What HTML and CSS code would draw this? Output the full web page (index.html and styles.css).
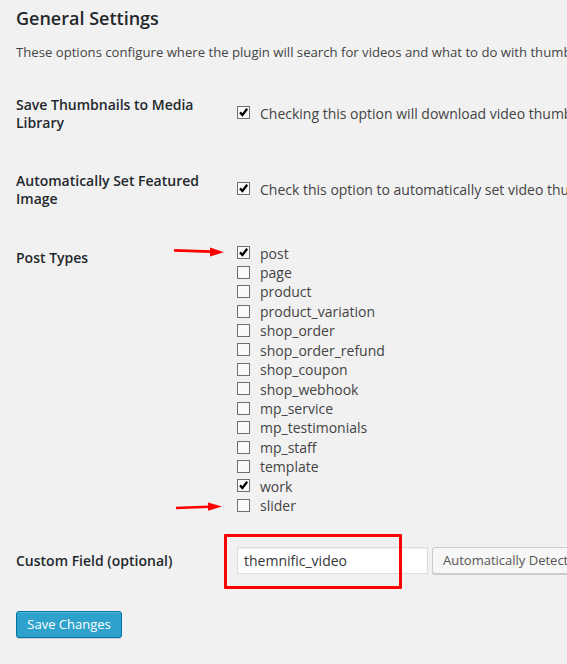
FILE: index.html
```html
<!DOCTYPE html>
<html>
<head>
<meta charset="utf-8">
<link rel="stylesheet" href="styles.css">
</head>
<body>
<div class="wrap">
  <h2 class="title">General Settings</h2>
  <p class="desc">These options configure where the plugin will search for videos and what to do with thumbnails once they are found.</p>

  <div class="row row-1">
    <div class="th">Save Thumbnails to Media Library</div>
    <div class="td">
      <label class="opt"><span class="cb checked"><svg viewBox="0 0 11 11"><path d="M2 5.4 L4.4 8 L9.2 1.8"/></svg></span>Checking this option will download video thumbnails to your media library</label>
    </div>
  </div>

  <div class="row row-2">
    <div class="th">Automatically Set Featured Image</div>
    <div class="td">
      <label class="opt"><span class="cb checked"><svg viewBox="0 0 11 11"><path d="M2 5.4 L4.4 8 L9.2 1.8"/></svg></span>Check this option to automatically set video thumbnails as the featured image</label>
    </div>
  </div>

  <div class="row row-3">
    <div class="th">Post Types</div>
    <div class="td list">
      <svg class="arrow arrow-1" viewBox="0 0 52 12"><path d="M1 4.4 L38 5.6" class="shaft"/><path d="M37 1.5 L51 6.2 L37 10.5 Z" class="head"/></svg>
      <label class="opt"><span class="cb checked"><svg viewBox="0 0 11 11"><path d="M2 5.4 L4.4 8 L9.2 1.8"/></svg></span>post</label>
      <label class="opt"><span class="cb"></span>page</label>
      <label class="opt"><span class="cb"></span>product</label>
      <label class="opt"><span class="cb"></span>product_variation</label>
      <label class="opt"><span class="cb"></span>shop_order</label>
      <label class="opt"><span class="cb"></span>shop_order_refund</label>
      <label class="opt"><span class="cb"></span>shop_coupon</label>
      <label class="opt"><span class="cb"></span>shop_webhook</label>
      <label class="opt"><span class="cb"></span>mp_service</label>
      <label class="opt"><span class="cb"></span>mp_testimonials</label>
      <label class="opt"><span class="cb"></span>mp_staff</label>
      <label class="opt"><span class="cb"></span>template</label>
      <label class="opt"><span class="cb checked"><svg viewBox="0 0 11 11"><path d="M2 5.4 L4.4 8 L9.2 1.8"/></svg></span>work</label>
      <label class="opt"><span class="cb"></span>slider</label>
      <svg class="arrow arrow-2" viewBox="0 0 48 12"><path d="M1 7 L34 5.8" class="shaft"/><path d="M33 1.6 L47 5.6 L33 9.8 Z" class="head"/></svg>
    </div>
  </div>

  <div class="row row-4">
    <div class="th">Custom Field (optional)</div>
    <div class="td field">
      <span class="highlight"></span>
      <input class="text" type="text" value="themnific_video">
      <button class="btn">Automatically Detect</button>
    </div>
  </div>

  <div class="submit">
    <button class="primary">Save Changes</button>
  </div>
</div>
</body>
</html>
```

FILE: styles.css
```css
html, body {
  margin: 0;
  padding: 0;
  background: #f1f1f1;
  overflow: hidden;
}
body {
  font-family: "Open Sans", "Noto Sans", sans-serif;
  font-size: 13px;
  color: #444;
  width: 567px;
  height: 664px;
}
.wrap {
  padding-left: 16px;
  white-space: nowrap;
}
.title {
  margin: 0;
  padding-top: 5px;
  font-size: 18px;
  line-height: 26px;
  font-weight: 600;
  color: #23282d;
}
.desc {
  margin: 12px 0 0;
  font-size: 13.15px;
  line-height: 19.5px;
}
.row {
  display: grid;
  grid-template-columns: 221px auto;
  align-items: start;
}
.th {
  white-space: normal;
  width: 200px;
  font-size: 14px;
  line-height: 18px;
  font-weight: 600;
  color: #23282d;
}
.td {
  position: relative;
}
.row-1 { margin-top: 33px; }
.row-1 .td { padding-top: 8px; }
.row-2 { margin-top: 40px; }
.row-2 .td { padding-top: 8px; }
.row-3 { margin-top: 41px; }
.row-3 .td { margin-top: -5px; }
.opt {
  display: flex;
  align-items: center;
  height: 19.45px;
  font-size: 14px;
  line-height: 19.45px;
}
.cb {
  box-sizing: border-box;
  width: 13px;
  height: 13px;
  margin: -1px 10px 0 0;
  border: 1px solid #6f6f6f;
  background: #fafafa;
  display: inline-block;
  flex: none;
}
.cb svg {
  display: block;
  width: 11px;
  height: 11px;
}
.cb svg path {
  fill: none;
  stroke: #000;
  stroke-width: 2.3;
  stroke-linecap: butt;
  stroke-linejoin: miter;
}
.arrow {
  position: absolute;
  overflow: visible;
}
.arrow .shaft {
  stroke: #f00;
  stroke-width: 2.6;
  fill: none;
}
.arrow .head {
  fill: #f00;
}
.arrow-1 {
  left: -64px;
  top: 2px;
  width: 52px;
  height: 12px;
}
.arrow-2 {
  left: -62px;
  top: 257px;
  width: 48px;
  height: 12px;
}
.row-4 { margin-top: 36px; }
.row-4 .td {
  margin-top: -5px;
  display: flex;
  align-items: flex-start;
}
.text {
  box-sizing: border-box;
  width: 191px;
  height: 27px;
  margin: 0;
  padding: 0 6px;
  border: 1px solid #ddd;
  background: #fff;
  box-shadow: inset 0 1px 2px rgba(0,0,0,0.07);
  font-family: "Open Sans", "Noto Sans", sans-serif;
  font-size: 14px;
  color: #32373c;
  outline: none;
}
.btn {
  box-sizing: border-box;
  margin-left: 4px;
  height: 27px;
  padding: 0 10px;
  border: 1px solid #ccc;
  border-radius: 3px;
  background: #f7f7f7;
  box-shadow: 0 1px 0 #ccc;
  font-family: "Open Sans", "Noto Sans", sans-serif;
  font-size: 13px;
  color: #555;
  white-space: nowrap;
}
.highlight {
  position: absolute;
  left: -13px;
  top: -13px;
  width: 178px;
  height: 55px;
  box-sizing: border-box;
  border: 3px solid #f00;
  border-radius: 1px;
  pointer-events: none;
}
.submit {
  margin-top: 37px;
}
.primary {
  box-sizing: border-box;
  height: 27px;
  width: 106px;
  padding: 0 10px;
  border: 1px solid #0074a2;
  border-radius: 3px;
  background: #2ea2cc;
  box-shadow: inset 0 1px 0 rgba(120,200,230,0.5), 0 1px 0 rgba(0,0,0,0.15);
  color: #fff;
  font-family: "Open Sans", "Noto Sans", sans-serif;
  font-size: 13px;
}
```
